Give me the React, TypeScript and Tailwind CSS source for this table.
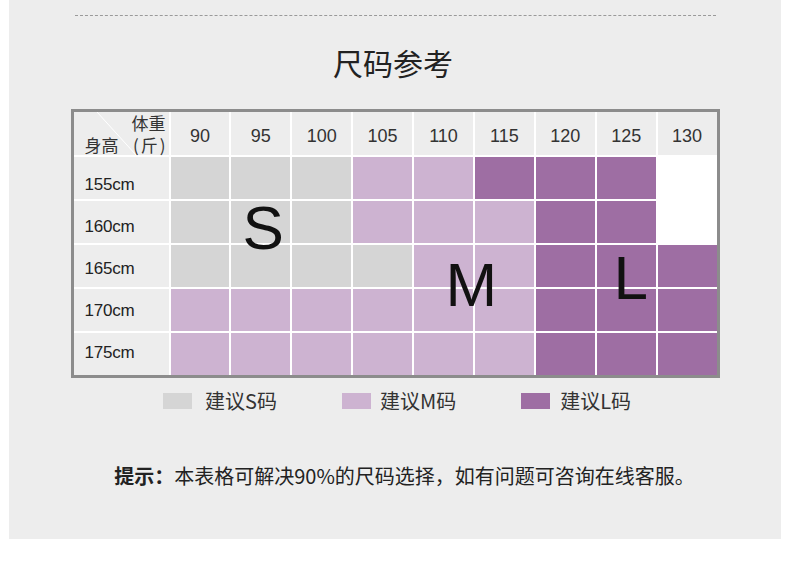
import React from "react";

const weights = ["90", "95", "100", "105", "110", "115", "120", "125", "130"];

// g = 建议S, m = 建议M, l = 建议L, w = 空
const rows: { h: string; cells: string; pad: string }[] = [
  { h: "155cm", cells: "gggmmlllw", pad: "pt-[13px]" },
  { h: "160cm", cells: "gggmmmllw", pad: "pt-[9px]" },
  { h: "165cm", cells: "ggggmmlll", pad: "pt-[5px]" },
  { h: "170cm", cells: "mmmmmmlll", pad: "pt-[1px]" },
  { h: "175cm", cells: "mmmmmmlll", pad: "pb-[3px]" },
];

const cellColor: Record<string, string> = {
  g: "bg-[#d5d5d5]",
  m: "bg-[#cdb3d1]",
  l: "bg-[#9e6ea3]",
  w: "bg-white",
};

const font = { fontFamily: '"Liberation Sans", "Noto Sans CJK SC", sans-serif' };
const cjk = { fontFamily: '"Noto Sans CJK SC", "Liberation Sans", sans-serif' };

function Legend({ color, label, gap }: { color: string; label: string; gap: string }) {
  return (
    <div className={`flex items-center ${gap}`}>
      <span className={`w-[29px] h-[16px] ${color}`} />
      <span className="text-[20px] leading-5 text-[#333]" style={cjk}>{label}</span>
    </div>
  );
}

export default function App() {
  return (
    <div className="w-[790px] h-[586px] bg-white" style={font}>
      <div className="mx-[9px] h-[539px] bg-[#ededed] flex flex-col items-center">
        <div className="mt-[15px] w-[641px] border-t border-dashed border-[#9a9a9a]" />

        <h1 className="mt-[31px] mr-[4px] text-[30px] leading-[30px] text-[#222]" style={cjk}>尺码参考</h1>

        <div className="mt-[32px] border-[3px] border-[#8c8c8c]">
          <div className="relative w-[643px] grid grid-cols-[95px_repeat(9,1fr)] gap-[2px] bg-white">
            {/* header */}
            <div className="relative h-[43px] bg-[#ededed] text-[17px] text-[#333]" style={cjk}>
              <svg className="absolute inset-0" width="95" height="43">
                <line x1="23" y1="0" x2="62" y2="43" stroke="#ffffff" strokeWidth="1" />
              </svg>
              <span className="absolute right-[3px] top-[3px] leading-[16px]">体重</span>
              <span className="absolute right-[1px] top-[25px] leading-[16px] tracking-[2px]">(斤)</span>
              <span className="absolute left-[11px] top-[23px] leading-[20px]">身高</span>
            </div>
            {weights.map((w) => (
              <div key={w} className="h-[43px] bg-[#ededed] flex items-center justify-center pt-[6px] text-[18px] text-[#333]">
                {w}
              </div>
            ))}

            {rows.map((r) => (
              <React.Fragment key={r.h}>
                <div className={`h-[42px] bg-[#ededed] flex items-center pl-[11px] ${r.pad} text-[17px] text-[#222] tracking-[-0.2px]`}>
                  {r.h}
                </div>
                {r.cells.split("").map((c, i) => (
                  <div key={i} className={`h-[42px] ${cellColor[c]}`} />
                ))}
              </React.Fragment>
            ))}

            <span className="absolute left-[169px] top-[85px] text-[62px] leading-none text-[#111]">S</span>
            <span className="absolute left-[372px] top-[142px] text-[62px] leading-none text-[#111]">M</span>
            <span className="absolute left-[540px] top-[135px] text-[62px] leading-none text-[#111]">L</span>
          </div>
        </div>

        <div className="mt-[13px] ml-[4px] flex items-center gap-[65px]">
          <Legend color="bg-[#d5d5d5]" label="建议S码" gap="gap-[13px]" />
          <Legend color="bg-[#cdb3d1]" label="建议M码" gap="gap-[9px]" />
          <Legend color="bg-[#9e6ea3]" label="建议L码" gap="gap-[10px]" />
        </div>

        <p className="mt-[53px] ml-[19px] text-[20px] leading-6 text-[#222]" style={cjk}>
          <span className="font-bold">提示：</span>本表格可解决90%的尺码选择，如有问题可咨询在线客服。
        </p>
      </div>
    </div>
  );
}
